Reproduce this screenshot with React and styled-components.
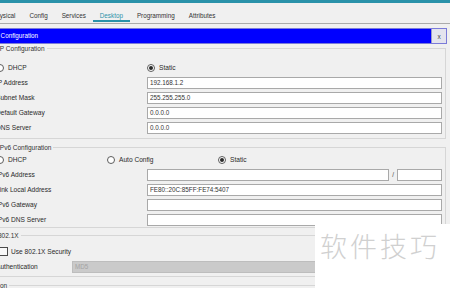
import React from "react";
import styled, { createGlobalStyle } from "styled-components";

const Global = createGlobalStyle`
  html, body { margin: 0; padding: 0; background: #f0f0f0; }
  #root { width: 450px; height: 288px; }
`;

const Frame = styled.div`
  position: relative;
  width: 450px;
  height: 288px;
  overflow: hidden;
  background: #f0f0f0;
  font-family: "Liberation Sans", Arial, sans-serif;
  color: #262626;
`;

const TopStrip = styled.div`
  height: 3px;
  background: #2a92aa;
`;

const TabBar = styled.div`
  display: flex;
  align-items: flex-end;
  height: 20px;
  border-bottom: 1px solid #ababab;
  padding-left: 0;
`;

const Tabs = styled.div`
  display: flex;
  margin-left: -15px;
  margin-bottom: 1px;
`;

const Tab = styled.div`
  padding: 0 7px;
  height: 8px;
  line-height: 8px;
  font-size: 6.3px;
  color: ${(p) => (p.$active ? "#2a92aa" : "#333")};
  border-bottom: 2px solid ${(p) => (p.$active ? "#2a92aa" : "transparent")};
  white-space: nowrap;
`;

const Content = styled.div`
  margin-left: -10px;
  width: 457px;
  padding-top: 4px;
  display: flex;
  flex-direction: column;
`;

const TitleBar = styled.div`
  display: flex;
  align-items: stretch;
  height: 16px;
  box-sizing: border-box;
  border: 1px solid #7b7bd8;
  background: #0000ff;
`;

const TitleText = styled.div`
  flex: 1;
  color: #fff;
  font-size: 6.3px;
  line-height: 14px;
  padding-left: 2px;
  white-space: nowrap;
`;

const CloseButton = styled.div`
  width: 14px;
  display: flex;
  align-items: center;
  justify-content: center;
  background: #e4e4ee;
  border-left: 1px solid #9a9ac8;
  font-size: 6.5px;
  color: #444;
`;

const Group = styled.div`
  display: flex;
  flex-direction: column;
  margin: ${(p) => p.$mt}px 1px 0 2px;
  border: 1px solid #d6d6d6;
  border-left-color: transparent;
  padding: 0 3px ${(p) => p.$pb}px 3px;
`;

const Legend = styled.div`
  align-self: flex-start;
  margin-top: -4.5px;
  margin-left: ${(p) => p.$ml || 0}px;
  height: 8px;
  line-height: 8px;
  padding: 0 2px;
  background: #f0f0f0;
  font-size: 6.5px;
  color: #333;
  white-space: nowrap;
`;

const Rows = styled.div`
  display: flex;
  flex-direction: column;
  margin-top: ${(p) => p.$gap}px;
`;

const Row = styled.div`
  display: grid;
  grid-template-columns: ${(p) => p.$label || 151}px 1fr;
  align-items: center;
  height: 15px;
`;

const Label = styled.div`
  font-size: 6.6px;
  color: #2a2a2a;
  white-space: nowrap;
`;

const Input = styled.div`
  height: 12px;
  box-sizing: border-box;
  border: 1px solid #a9a9a9;
  background: #fff;
  font-size: 6.3px;
  line-height: 10px;
  padding: 0 2px;
  color: #333;
  white-space: nowrap;
  overflow: hidden;
`;

const Select = styled(Input)`
  background: #cacaca;
  border-color: #bdbdbd;
  color: #a4a4a4;
`;

const PrefixLine = styled.div`
  display: grid;
  grid-template-columns: 1fr 8px 45px;
  align-items: center;
`;

const Slash = styled.div`
  font-size: 6.3px;
  text-align: center;
  color: #444;
`;

const RadioRow = styled.div`
  display: flex;
  align-items: center;
  height: 15px;
`;

const Option = styled.div`
  display: flex;
  align-items: center;
  gap: 4px;
  width: ${(p) => (p.$w ? `${p.$w}px` : "auto")};
  font-size: 6.6px;
  color: #2a2a2a;
  white-space: nowrap;
`;

const Radio = styled.span`
  width: 8px;
  height: 8px;
  box-sizing: border-box;
  border-radius: 50%;
  border: 1px solid #5c5c5c;
  background: #fff;
  display: inline-flex;
  align-items: center;
  justify-content: center;
  &::after {
    content: "";
    width: 4px;
    height: 4px;
    border-radius: 50%;
    background: #2a2a2a;
    display: ${(p) => (p.$on ? "block" : "none")};
  }
`;

const CheckRow = styled.div`
  display: flex;
  align-items: center;
  gap: 3px;
  height: 15px;
  padding-left: 3px;
  font-size: 6.6px;
  color: #2a2a2a;
`;

const Checkbox = styled.span`
  width: 9px;
  height: 9px;
  box-sizing: border-box;
  border: 1px solid #4a4a4a;
  background: #f8f8f8;
`;

const Watermark = styled.div`
  position: absolute;
  left: 315px;
  top: 224px;
  right: 0;
  bottom: 0;
  background: #ffffff;
  padding: 8px 0 0 5px;
  font-family: "Noto Sans CJK SC", "Noto Sans", sans-serif;
  font-size: 27px;
  font-weight: 300;
  line-height: 27px;
  letter-spacing: 3px;
  color: #d0d0d0;
  white-space: nowrap;
`;

const Field = ({ label, value, labelWidth }) => (
  <Row $label={labelWidth}>
    <Label>{label}</Label>
    <Input>{value}</Input>
  </Row>
);

export default function App() {
  return (
    <>
      <Global />
      <Frame>
        <TopStrip />
        <TabBar>
          <Tabs>
            <Tab>Physical</Tab>
            <Tab>Config</Tab>
            <Tab>Services</Tab>
            <Tab $active>Desktop</Tab>
            <Tab>Programming</Tab>
            <Tab>Attributes</Tab>
          </Tabs>
        </TabBar>
        <Content>
          <TitleBar>
            <TitleText>IP Configuration</TitleText>
            <CloseButton>x</CloseButton>
          </TitleBar>

          <Group $mt={4} $pb={3}>
            <Legend>IP Configuration</Legend>
            <Rows $gap={7.5}>
              <RadioRow>
                <Option $w={151}>
                  <Radio />
                  DHCP
                </Option>
                <Option>
                  <Radio $on />
                  Static
                </Option>
              </RadioRow>
              <Field label="IP Address" value="192.168.1.2" />
              <Field label="Subnet Mask" value="255.255.255.0" />
              <Field label="Default Gateway" value="0.0.0.0" />
              <Field label="DNS Server" value="0.0.0.0" />
            </Rows>
          </Group>

          <Group $mt={8} $pb={0}>
            <Legend>IPv6 Configuration</Legend>
            <Rows $gap={0.5}>
              <RadioRow>
                <Option $w={111}>
                  <Radio />
                  DHCP
                </Option>
                <Option $w={111}>
                  <Radio />
                  Auto Config
                </Option>
                <Option>
                  <Radio $on />
                  Static
                </Option>
              </RadioRow>
              <Row>
                <Label>IPv6 Address</Label>
                <PrefixLine>
                  <Input />
                  <Slash>/</Slash>
                  <Input />
                </PrefixLine>
              </Row>
              <Field label="Link Local Address" value="FE80::20C:85FF:FE74:5407" />
              <Field label="IPv6 Gateway" value="" />
              <Field label="IPv6 DNS Server" value="" />
            </Rows>
          </Group>

          <Group $mt={7} $pb={2}>
            <Legend>802.1X</Legend>
            <Rows $gap={4.5}>
              <CheckRow>
                <Checkbox />
                Use 802.1X Security
              </CheckRow>
              <Row $label={76}>
                <Label>Authentication</Label>
                <Select>MD5</Select>
              </Row>
            </Rows>
          </Group>

          <Group $mt={8} $pb={0}>
            <Legend $ml={2}>on</Legend>
          </Group>
        </Content>
        <Watermark>软件技巧</Watermark>
      </Frame>
    </>
  );
}
